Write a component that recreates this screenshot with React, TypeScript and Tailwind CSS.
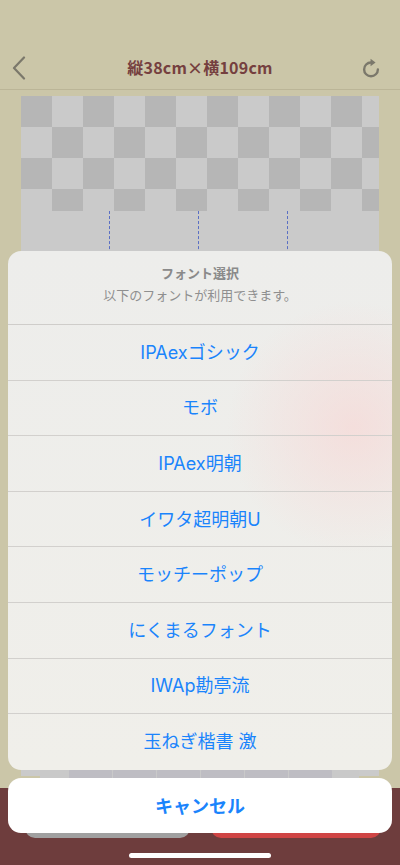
const fonts = [
    "IPAexゴシック",
    "モボ",
    "IPAex明朝",
    "イワタ超明朝U",
    "モッチーポップ",
    "にくまるフォント",
    "IWAp勘亭流",
    "玉ねぎ楷書 激",
]

const BackIcon = () => (
    <svg width="14" height="24" viewBox="0 0 14 24" fill="none">
        <path d="M12 1.5L2 12l10 10.5" stroke="#7b786b" strokeWidth="2.2" strokeLinecap="round" strokeLinejoin="round" />
    </svg>
)

const RefreshIcon = () => (
    <svg width="22" height="22" viewBox="0 0 24 24" fill="none">
        <path d="M19.5 13.5A7.5 7.5 0 1 1 12 6" stroke="#7b786b" strokeWidth="2.6" strokeLinecap="round" />
        <path d="M11.5 1.8L17 6l-5.5 4.2Z" fill="#7b786b" />
    </svg>
)

const Checker = () => {
    const rows = [0, 1, 2, 3]
    const cols = Array.from({ length: 12 }, (_, i) => i)
    return (
        <div className="flex flex-col overflow-hidden">
            {rows.map(r => (
                <div key={r} className={`flex shrink-0 ${r === 3 ? "h-[22px]" : "h-[31px]"}`}>
                    {cols.map(c => (
                        <div
                            key={c}
                            className={`w-[31px] shrink-0 ${(r + c) % 2 === 0 ? "bg-[#b6b6b6]" : "bg-[#cacaca]"}`}
                        />
                    ))}
                </div>
            ))}
        </div>
    )
}

export default function App() {
    return (
        <div className="relative w-[400px] h-[865px] overflow-hidden bg-[#cbc6a8] font-['Inter','Noto_Sans_CJK_JP',sans-serif]">
            {/* header */}
            <div className="h-[90px] border-b border-[#bbb597] pt-[50px]">
                <div className="h-[36px] grid grid-cols-[1fr_auto_1fr] items-center px-[12px]">
                    <BackIcon />
                    <p className="text-[16px] font-bold text-[#75403f] tracking-[0.2px] font-['Noto_Sans_CJK_JP',sans-serif] -translate-y-[1px]">
                        縦38cm×横109cm
                    </p>
                    <div className="flex justify-end pr-[6px]">
                        <RefreshIcon />
                    </div>
                </div>
            </div>

            {/* canvas */}
            <div className="mx-[21px] mt-[6px] h-[680px] bg-[#cacaca] overflow-hidden">
                <Checker />
                <div className="flex h-full">
                    <div className="w-[89px] border-r border-dashed border-[#5a6fc4]" />
                    <div className="w-[89px] border-r border-dashed border-[#5a6fc4]" />
                    <div className="w-[89px] border-r border-dashed border-[#5a6fc4]" />
                </div>
            </div>

            {/* keys behind sheet */}
            <div className="absolute top-[769px] left-[40px] w-[319px] h-[9px] flex gap-[1px] bg-[#c9c9c9]">
                <div className="w-[28px]" />
                {[0, 1, 2, 3, 4, 5].map(i => (
                    <div key={i} className="w-[43px] bg-[#bebdc3] rounded-t-[2px]" />
                ))}
            </div>

            {/* bottom bar */}
            <div className="absolute left-0 right-0 top-[788px] bottom-0 bg-[#6e3d3d]">
                <div className="flex justify-between px-[25px] pr-[19px]">
                    <div className="w-[165px] h-[50px] rounded-b-[10px] bg-[#a0a0a0]" />
                    <div className="w-[170px] h-[50px] rounded-b-[10px] bg-[#cf4444]" />
                </div>
                <div className="absolute left-[129px] top-[65px] w-[142px] h-[5px] rounded-full bg-white" />
            </div>

            {/* action sheet */}
            <div className="absolute left-[8px] right-[8px] top-[251px] flex flex-col gap-[8px]">
                <div className="rounded-[13px] overflow-hidden bg-[#eeeeec] bg-[radial-gradient(circle_at_90%_34%,rgba(248,212,210,0.6),rgba(248,220,216,0)_26%),linear-gradient(180deg,#ededeb,#f0efea)]">
                    <div className="h-[74px] flex flex-col items-center pt-[12px] gap-[2px] border-b border-[#cfcdca]">
                        <p className="text-[13px] font-bold text-[#8a8a8a] font-['Noto_Sans_CJK_JP',sans-serif]">フォント選択</p>
                        <p className="text-[13px] text-[#8f8f8f] font-['Noto_Sans_CJK_JP',sans-serif]">以下のフォントが利用できます。</p>
                    </div>
                    {fonts.map((f, i) => (
                        <div
                            key={f}
                            className={`h-[55.6px] flex items-center justify-center text-[18px] text-[#1a84fc] ${i < fonts.length - 1 ? "border-b border-[#d2d0cd]" : ""}`}
                        >
                            {f}
                        </div>
                    ))}
                </div>
                <div className="h-[55px] rounded-[13px] bg-white flex items-center justify-center">
                    <p className="text-[18px] font-bold text-[#1a84fc] font-['Noto_Sans_CJK_JP',sans-serif]">キャンセル</p>
                </div>
            </div>
        </div>
    )
}
